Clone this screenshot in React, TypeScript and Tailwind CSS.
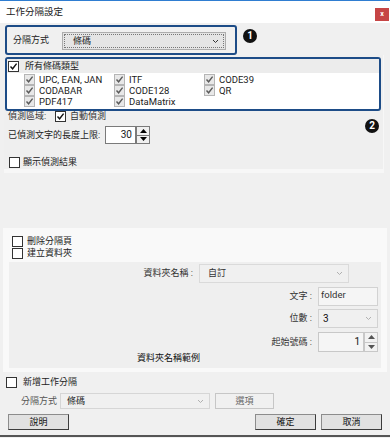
import React from 'react';

type BoxProps = { checked?: boolean; dim?: boolean };

function Check({ checked = false, dim = false }: BoxProps) {
  return (
    <span
      className={
        dim
          ? 'flex h-[11px] w-[11px] shrink-0 items-center justify-center border border-[#b5b5b5] bg-[#e8e8e8]'
          : 'flex h-[11px] w-[11px] shrink-0 items-center justify-center border border-[#333333] bg-white'
      }
    >
      {checked && (
        <svg width="9" height="9" viewBox="0 0 9 9">
          <path d="M1.5 4.5 L3.6 6.8 L7.6 1.6" fill="none" stroke={dim ? '#5a5a5a' : '#111111'} strokeWidth="1.4" />
        </svg>
      )}
    </span>
  );
}

function Badge({ n }: { n: string }) {
  return (
    <span className="flex h-[14px] w-[14px] items-center justify-center rounded-full bg-[#111111] text-[10px] font-bold leading-none text-white">
      {n}
    </span>
  );
}

function Chevron({ color = '#555555' }: { color?: string }) {
  return (
    <svg width="7" height="5" viewBox="0 0 7 5">
      <path d="M1 1 L3.5 3.5 L6 1" fill="none" stroke={color} strokeWidth="1" />
    </svg>
  );
}

function Spinner({ light = false }: { light?: boolean }) {
  const cell = light
    ? 'flex flex-1 items-center justify-center border border-[#c8c8c8] bg-[#f2f2f2]'
    : 'flex flex-1 items-center justify-center border border-[#7a7a7a] bg-[#f0f0f0]';
  const fill = light ? '#555555' : '#000000';
  return (
    <div className="flex w-[14px] flex-col">
      <span className={cell}>
        <svg width="7" height="4" viewBox="0 0 7 4"><path d="M0 4 L3.5 0 L7 4 Z" fill={fill} /></svg>
      </span>
      <span className={cell + ' -mt-px'}>
        <svg width="7" height="4" viewBox="0 0 7 4"><path d="M0 0 L3.5 4 L7 0 Z" fill={fill} /></svg>
      </span>
    </div>
  );
}

const codes = ['UPC, EAN, JAN', 'ITF', 'CODE39', 'CODABAR', 'CODE128', 'QR', 'PDF417', 'DataMatrix'];

function WinButton({ label, width }: { label: string; width: string }) {
  return (
    <button className={`flex h-[16px] ${width} items-center justify-center border border-[#8c8c8c] border-b-[#3c3c3c] border-r-[#3c3c3c] bg-[#e1e1e1] text-[9px] text-[#111111]`}>
      {label}
    </button>
  );
}

export default function App() {
  return (
    <div className="flex h-[438px] w-[390px] flex-col overflow-hidden bg-[#f0f0f0] font-[Roboto,'Noto_Sans_CJK_TC',sans-serif] text-[9px] leading-none text-[#1a1a1a]">
      {/* title */}
      <div className="h-px bg-[#2f7dd1]" />
      <div className="flex h-[22px] items-center justify-between bg-white pl-[6px] pr-[1px]">
        <span className="text-[9.5px] text-[#222222]">工作分隔設定</span>
        <span className="mt-[5px] flex h-[13px] w-[14px] items-center justify-center bg-[#c64545] text-[7px] font-bold text-white">x</span>
      </div>

      {/* split method */}
      <div className="mt-[2px] flex items-start">
        <div className="ml-[5px] flex h-[30px] w-[232px] items-center rounded-[3px] border-2 border-[#1d4c87] pl-[6px]">
          <span className="w-[49px] text-[#222222]">分隔方式</span>
          <div className="mt-[2px] flex h-[18px] w-[164px] items-center justify-between border border-[#adadad] bg-[#e5e5e5] p-px">
            <div className="flex h-full w-full items-center justify-between border border-dotted border-[#777777] pl-[8px] pr-[4px]">
              <span>條碼</span>
              <Chevron color="#333333" />
            </div>
          </div>
        </div>
        <div className="ml-[6px] mt-[4px]">
          <Badge n="1" />
        </div>
      </div>

      {/* barcode panel */}
      <div className="relative ml-[4px] w-[380px] border-b-4 border-r border-[#f7f7f7] bg-[#efefef] pb-[1px]">
        <div className="relative z-10 mt-[2px] ml-px w-[376px] overflow-hidden rounded-[3px] border-2 border-[#1d4c87] bg-white">
          <div className="flex h-[14px] items-center gap-[6px] bg-[#ececec] pl-[1px]">
            <Check checked />
            <span className="text-[#222222]">所有條碼類型</span>
          </div>
          <div className="grid h-[36px] grid-cols-[90px_90px_90px] content-start pl-[17px] pt-[1px]">
            {codes.map((c) => (
              <div key={c} className="flex h-[11px] items-center gap-[4px]">
                <Check checked dim />
                <span className="text-[9.5px] text-[#222222]">{c}</span>
              </div>
            ))}
          </div>
        </div>
        <div className="-mt-[2px] flex h-[14px] items-center pl-[4px]">
          <span className="w-[47px] text-[#333333]">偵測區域:</span>
          <Check checked />
          <span className="ml-[4px] text-[#333333]">自動偵測</span>
        </div>
        <div className="mt-[3px] flex h-[18px] items-center pl-[4px]">
          <span className="w-[97px] text-[#222222]">已偵測文字的長度上限:</span>
          <div className="flex h-full items-center justify-end border border-[#7a7a7a] bg-white pr-[3px] w-[31px] text-[10px]">30</div>
          <div className="flex h-full">
            <Spinner />
          </div>
        </div>
        <div className="mt-[13px] flex h-[11px] items-center gap-[3px] pl-[5px]">
          <Check />
          <span className="text-[#222222]">顯示偵測結果</span>
        </div>
        <div className="absolute right-[4px] top-[64px]">
          <Badge n="2" />
        </div>
      </div>

      {/* folder section */}
      <div className="mx-[3px] mt-[55px] bg-[#f9f9f9] pb-[4px] pt-[8px]">
        <div className="flex h-[11px] items-center gap-[4px] pl-[9px]">
          <Check />
          <span className="text-[#222222]">刪除分隔頁</span>
        </div>
        <div className="mt-px flex h-[11px] items-center gap-[4px] pl-[9px]">
          <Check />
          <span className="text-[#222222]">建立資料夾</span>
        </div>
        <div className="mx-[6px] mt-[3px] h-[106px] bg-[#efefef] pt-[2px] text-[#333333]">
          <div className="flex h-[19px] items-center justify-end pr-[32px]">
            <span className="mr-[6px]">資料夾名稱 :</span>
            <div className="flex h-full w-[150px] items-center justify-between border border-[#dadada] bg-[#f0f0f0] pl-[8px] pr-[5px]">
              <span>自訂</span>
              <Chevron color="#b0b0b0" />
            </div>
          </div>
          <div className="mt-[4px] flex h-[19px] items-center justify-end pr-[3px]">
            <span className="mr-[6px]">文字 :</span>
            <div className="h-full w-[60px] border border-[#d2d2d2] bg-[#f5f5f5] pl-[2px] pt-[2px] text-[9.5px]">folder</div>
          </div>
          <div className="mt-[3px] flex h-[19px] items-center justify-end pr-[3px]">
            <span className="mr-[6px]">位數 :</span>
            <div className="flex h-full w-[60px] items-center justify-between border border-[#d2d2d2] bg-[#f0f0f0] pl-[4px] pr-[5px]">
              <span className="text-[10px] text-[#111111]">3</span>
              <Chevron color="#b0b0b0" />
            </div>
          </div>
          <div className="mt-[4px] flex h-[20px] items-center justify-end pr-[3px]">
            <span className="mr-[6px]">起始號碼 :</span>
            <div className="flex h-full w-[46px] items-center justify-end border border-[#c8c8c8] bg-[#f5f5f5] pr-[3px] text-[10px] text-[#111111]">1</div>
            <div className="flex h-full">
              <Spinner light />
            </div>
          </div>
          <div className="flex h-[12px] items-center pl-[128px] text-[#111111]">資料夾名稱範例</div>
        </div>
      </div>

      {/* new job split */}
      <div className="flex flex-1 flex-col bg-[#f0f0f0]">
        <div className="mt-[5px] flex h-[11px] items-center gap-[6px] pl-[6px]">
          <Check />
          <span className="text-[#222222]">新增工作分隔</span>
        </div>
        <div className="mt-[5px] flex h-[16px] items-center">
          <span className="ml-[21px] w-[39px] text-[#555555]">分隔方式</span>
          <div className="flex h-full w-[150px] items-center justify-between border border-[#d6d6d6] bg-[#f0f0f0] pl-[6px] pr-[5px]">
            <span className="text-[#222222]">條碼</span>
            <Chevron color="#b0b0b0" />
          </div>
          <div className="ml-[5px] flex h-full w-[59px] items-center justify-center border border-[#c6c6c6] bg-[#f0f0f0] text-[#666666]">選項</div>
        </div>
        <div className="mt-[5px] flex items-center pl-[8px] pr-[8px]">
          <WinButton label="說明" width="w-[61px]" />
          <div className="flex-1" />
          <WinButton label="確定" width="w-[61px]" />
          <div className="w-[5px]" />
          <WinButton label="取消" width="w-[61px]" />
        </div>
        <div className="mt-[5px] h-[2px] bg-[#555555]" />
      </div>
    </div>
  );
}
